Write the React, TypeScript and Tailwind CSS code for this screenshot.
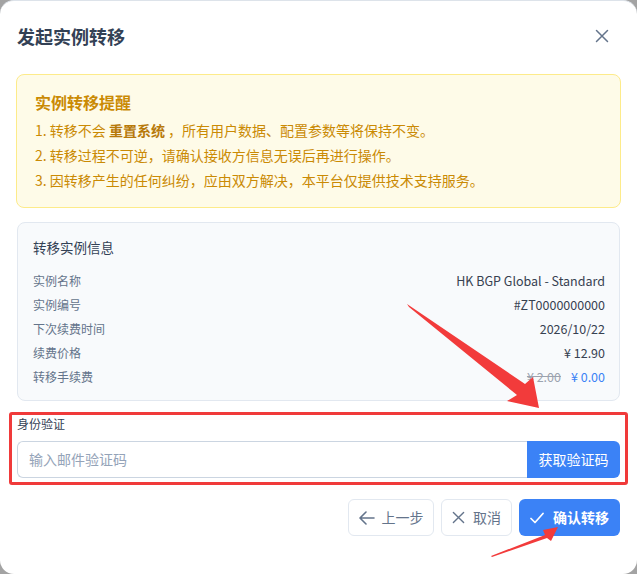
const font = { fontFamily: '"Noto Sans CJK SC", "Noto Sans", sans-serif' };

const rows: { label: string; value: string }[] = [
  { label: '实例名称', value: 'HK BGP Global - Standard' },
  { label: '实例编号', value: '#ZT0000000000' },
  { label: '下次续费时间', value: '2026/10/22' },
  { label: '续费价格', value: '¥ 12.90' },
];

function CloseIcon({ size = 14 }: { size?: number }) {
  return (
    <svg width={size} height={size} viewBox="0 0 14 14" fill="none" stroke="currentColor" strokeWidth="1.5" strokeLinecap="round">
      <path d="M1.5 1.5L12.5 12.5M12.5 1.5L1.5 12.5" />
    </svg>
  );
}

function ArrowLeftIcon() {
  return (
    <svg width="16" height="14" viewBox="0 0 16 14" fill="none" stroke="currentColor" strokeWidth="1.6" strokeLinecap="round" strokeLinejoin="round">
      <path d="M15 7H1.5M7 1L1 7l6 6" />
    </svg>
  );
}

function CheckIcon() {
  return (
    <svg width="14" height="12" viewBox="0 0 14 12" fill="none" stroke="currentColor" strokeWidth="1.7" strokeLinecap="round" strokeLinejoin="round">
      <path d="M1 6.5l4 4L13 1.5" />
    </svg>
  );
}

export default function App() {
  return (
    <div className="relative w-[637px] h-[574px] bg-[#a3a3a3] overflow-hidden" style={font}>
      <div className="w-full h-full bg-white rounded-[14px] border-t border-[#dde3ea] flex flex-col">
        {/* header */}
        <div className="flex items-center justify-between pl-[17px] pr-[28px] pt-[21px]">
          <h1 className="text-[18px] leading-[28px] font-bold text-[#334155]">发起实例转移</h1>
          <span className="text-[#64748b]">
            <CloseIcon />
          </span>
        </div>

        <div className="px-[16px] mt-[24px]">
          {/* warning */}
          <div className="rounded-lg border border-[#fdeb8a] bg-[#fefbe8] pl-[18px] pr-4 pt-[15px] pb-[14px]">
            <div className="text-[16px] leading-[24px] font-bold text-[#ca8a04]">实例转移提醒</div>
            <ul className="mt-[4px] text-[14px] leading-[25px] text-[#ca8a04]">
              <li>
                1. 转移不会 <span className="font-bold text-[#b7790a]">重置系统</span> ，所有用户数据、配置参数等将保持不变。
              </li>
              <li>2. 转移过程不可逆，请确认接收方信息无误后再进行操作。</li>
              <li>3. 因转移产生的任何纠纷，应由双方解决，本平台仅提供技术支持服务。</li>
            </ul>
          </div>

          {/* instance info */}
          <div className="mt-[14px] mx-px rounded-lg border border-[#e2e8f0] bg-[#f8fafc] pl-[15px] pr-[14px] pt-[14px] pb-[11px]">
            <div className="text-[13.5px] leading-[20px] text-[#334155]">转移实例信息</div>
            <div className="mt-3">
              {rows.map((r) => (
                <div key={r.label} className="flex items-center justify-between h-[24px] text-[12px]">
                  <span className="text-[#64748b]">{r.label}</span>
                  <span className="text-[#374151] text-[12.5px]">{r.value}</span>
                </div>
              ))}
              <div className="flex items-center justify-between h-[24px] text-[12px]">
                <span className="text-[#64748b]">转移手续费</span>
                <span className="flex items-center gap-[10px] text-[12.5px]">
                  <span className="text-[#9ca3af] line-through">¥ 2.00</span>
                  <span className="text-[#3b82f6]">¥ 0.00</span>
                </span>
              </div>
            </div>
          </div>

          {/* verification */}
          <div className="mt-[14px] px-px">
            <div className="text-[12px] leading-[18px] text-[#334155]">身份验证</div>
            <div className="mt-2 flex h-[37px]">
              <input
                placeholder="输入邮件验证码"
                className="flex-1 min-w-0 rounded-l-md border border-r-0 border-[#cbd5e1] bg-white px-[11px] text-[14px] text-[#334155] placeholder:text-[#94a3b8] outline-none"
              />
              <button className="w-[93px] rounded-r-md bg-[#3b82f6] text-white text-[14px]">获取验证码</button>
            </div>
          </div>

          {/* footer */}
          <div className="mt-[21px] flex justify-end gap-[7px] pr-px">
            <button className="h-[37px] w-[86px] flex items-center justify-center gap-[7px] rounded-md border border-[#e2e8f0] bg-white text-[14px] text-[#64748b]">
              <ArrowLeftIcon />
              上一步
            </button>
            <button className="h-[37px] w-[71px] flex items-center justify-center gap-[8px] rounded-md border border-[#e2e8f0] bg-white text-[14px] text-[#64748b]">
              <CloseIcon size={13} />
              取消
            </button>
            <button className="h-[37px] w-[101px] flex items-center justify-center gap-[9px] rounded-md bg-[#3b82f6] text-[14px] font-bold text-white">
              <CheckIcon />
              确认转移
            </button>
          </div>
        </div>
      </div>

      {/* annotations */}
      <div className="absolute left-[9px] top-[412px] w-[619px] h-[73px] border-[3px] border-[#f03a3a] rounded-[3px] pointer-events-none" />
      <svg className="absolute inset-0 pointer-events-none" width="637" height="574" viewBox="0 0 637 574">
        <polygon fill="#f23b3b" points="407,304 525,384 533,377 539,408 507,401 517,395 409,307" />
        <polygon fill="#f23b3b" points="491,556 545,535 543,530 558,527 551,541 547,538 492,557" />
      </svg>
    </div>
  );
}
